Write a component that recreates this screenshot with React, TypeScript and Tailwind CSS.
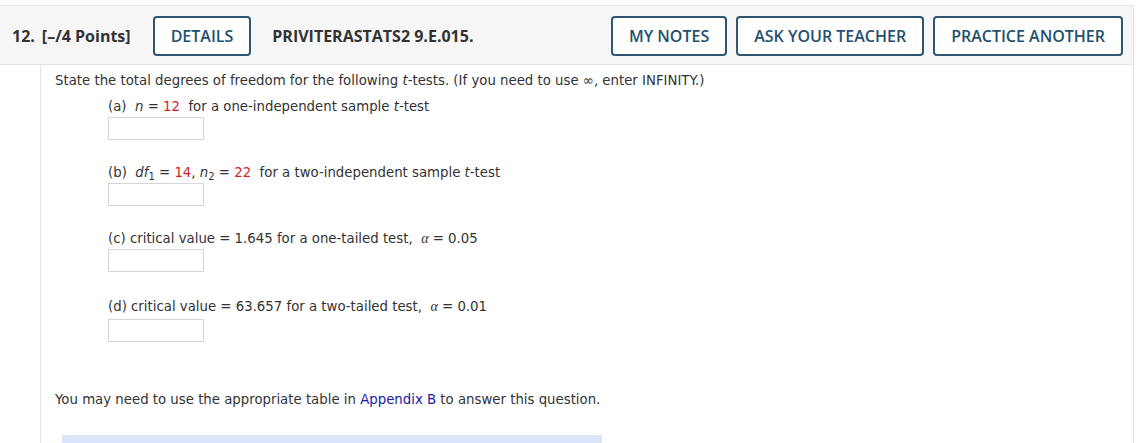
import React from 'react'

const headerFont = { fontFamily: '"Open Sans", "Liberation Sans", sans-serif' }
const bodyFont = { fontFamily: '"DejaVu Sans", Verdana, sans-serif' }

function HeaderButton({ label }: { label: string }) {
  return (
    <button
      type="button"
      className="flex h-10 items-center rounded-[4px] border-2 border-[#2f5673] bg-white px-4 text-[16px] font-semibold text-[#24506f]"
      style={headerFont}
    >
      {label}
    </button>
  )
}

function AnswerBox() {
  return <div className="mt-[1px] h-[23px] w-[96px] border border-[#d6d6d6] bg-white" />
}

function Red({ children }: { children: React.ReactNode }) {
  return <span className="text-[#d21f1f]">{children}</span>
}

function Sub({ children }: { children: React.ReactNode }) {
  return <span className="relative top-[3px] text-[10px] leading-none">{children}</span>
}

function Alpha() {
  return <i className="font-['Liberation_Serif',serif] text-[14px] leading-none">α</i>
}

export default function App() {
  return (
    <div className="h-[443px] w-[1144px] overflow-hidden bg-white pt-[5px]">
      <div className="mr-[10px]">
        {/* question header */}
        <div className="flex h-[60px] items-center border-y border-r border-[#e3e3e3] bg-[#f6f6f6] pl-3 pr-[10px] pt-[2px] text-[#333]" style={headerFont}>
          <span className="text-[16px] font-bold">12.</span>
          <span className="ml-[7px] text-[16px] font-bold">[–/4 Points]</span>
          <div className="ml-[22px]">
            <HeaderButton label="DETAILS" />
          </div>
          <span className="ml-[21px] text-[16px] font-bold">PRIVITERASTATS2 9.E.015.</span>
          <div className="ml-auto flex gap-[9px]">
            <HeaderButton label="MY NOTES" />
            <HeaderButton label="ASK YOUR TEACHER" />
            <HeaderButton label="PRACTICE ANOTHER" />
          </div>
        </div>

        {/* question body */}
        <div className="ml-[40px] h-[400px] border-x border-[#e3e3e3] pl-[14px] pt-[7px] text-[13.3px] text-[#333]" style={bodyFont}>
          <p className="leading-[18px]">
            State the total degrees of freedom for the following <i>t</i>-tests. (If you need to use ∞, enter INFINITY.)
          </p>

          <div className="ml-[53px] mt-[8px]">
            <p className="leading-[18px]">
              (a)&nbsp; <i>n</i> = <Red>12</Red>&nbsp; for a one-independent sample <i>t</i>-test
            </p>
            <AnswerBox />

            <p className="mt-[24px] leading-[18px]">
              (b)&nbsp; <i>df</i><Sub>1</Sub> = <Red>14</Red>, <i>n</i><Sub>2</Sub> = <Red>22</Red>&nbsp; for a two-independent sample <i>t</i>-test
            </p>
            <AnswerBox />

            <p className="mt-[24px] leading-[18px]">
              (c) critical value = 1.645 for a one-tailed test,&nbsp; <Alpha /> = 0.05
            </p>
            <AnswerBox />

            <p className="mt-[26px] leading-[18px]">
              (d) critical value = 63.657 for a two-tailed test,&nbsp; <Alpha /> = 0.01
            </p>
            <div className="mt-[3px] h-[23px] w-[96px] border border-[#d6d6d6] bg-white" />
          </div>

          <p className="mt-[49px] leading-[18px]">
            You may need to use the appropriate table in <a className="text-[#1a1aa6]">Appendix B</a> to answer this question.
          </p>

          <div className="ml-[7px] mt-[26px] h-[20px] w-[540px] bg-[#dce4f9]" />
        </div>
      </div>
    </div>
  )
}
